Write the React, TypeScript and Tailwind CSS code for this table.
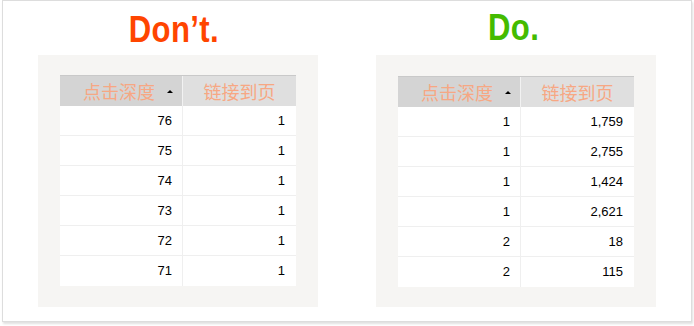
type Row = [string, string];

const dontRows: Row[] = [
  ["76", "1"],
  ["75", "1"],
  ["74", "1"],
  ["73", "1"],
  ["72", "1"],
  ["71", "1"],
];

const doRows: Row[] = [
  ["1", "1,759"],
  ["1", "2,755"],
  ["1", "1,424"],
  ["1", "2,621"],
  ["2", "18"],
  ["2", "115"],
];

function DataTable({ rows }: { rows: Row[] }) {
  return (
    <div className="w-[236px]">
      <div className="flex h-[31px] border-t border-[#c9c9c9] text-[18px] leading-[30px] text-[#f7a783] [font-family:'Noto_Sans_CJK_SC',sans-serif]">
        <div className="relative flex w-[122px] items-center justify-center bg-[#d4d4d4] pr-[4px]">
          <span>点击深度</span>
          <span className="absolute right-[9px] top-[14px] h-0 w-0 border-x-[3px] border-b-[3px] border-x-transparent border-b-black" />
        </div>
        <div className="w-px bg-[#f2f2f2]" />
        <div className="flex flex-1 items-center justify-center bg-[#dfdfdf]">
          <span>链接到页</span>
        </div>
      </div>
      {rows.map(([a, b], i) => (
        <div
          key={i}
          className={`flex h-[30px] bg-white text-[13px] leading-[29px] text-black [font-family:'Liberation_Sans',Arial,sans-serif] ${i < rows.length - 1 ? "border-b border-[#efefef]" : ""}`}
        >
          <div className="w-[122px] pr-[10px] text-right">{a}</div>
          <div className="w-px bg-[#efefef]" />
          <div className="flex-1 pr-[11px] text-right">{b}</div>
        </div>
      ))}
    </div>
  );
}

function Column({
  title,
  color,
  titleTop,
  tableTop,
  rows,
}: {
  title: string;
  color: string;
  titleTop: string;
  tableTop: string;
  rows: Row[];
}) {
  return (
    <div className="flex w-[280px] flex-col">
      <div className={`flex h-[54px] justify-center ${titleTop}`}>
        <h1
          className={`h-[37px] scale-x-[0.84] text-[37px] font-bold leading-[37px] tracking-[0.5px] ${color} [font-family:'Liberation_Sans',Arial,sans-serif]`}
        >
          {title}
        </h1>
      </div>
      <div className={`h-[252px] bg-[#f6f5f3] pl-[22px] ${tableTop}`}>
        <DataTable rows={rows} />
      </div>
    </div>
  );
}

export default function App() {
  return (
    <div className="h-[326px] w-[694px] bg-white">
      <div className="ml-[2px] flex h-[322px] w-[690px] gap-[58px] border border-[#dddddd] pl-[35px] shadow-[1px_2px_2px_rgba(0,0,0,0.12)]">
        <Column
          title="Don’t."
          color="text-[#ff4500]"
          titleTop="pt-[10px] pr-[8px]"
          tableTop="pt-[20px]"
          rows={dontRows}
        />
        <Column
          title="Do."
          color="text-[#44bb00]"
          titleTop="pt-[8px] pr-[5px]"
          tableTop="pt-[21px]"
          rows={doRows}
        />
      </div>
    </div>
  );
}
